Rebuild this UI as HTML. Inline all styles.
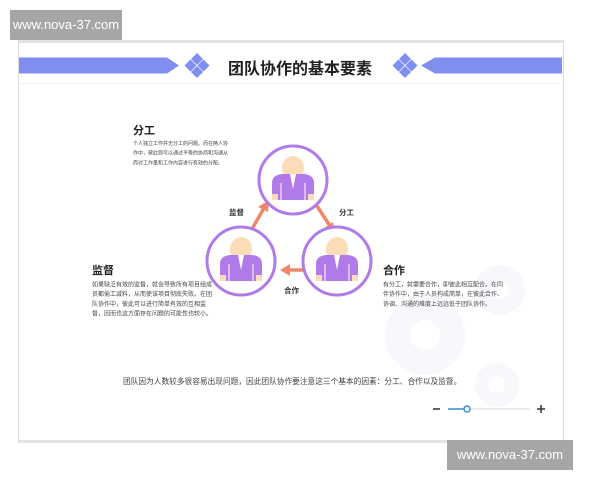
<!DOCTYPE html>
<html><head><meta charset="utf-8"><style>
body{margin:0;width:600px;height:480px;background:#fff;position:relative;overflow:hidden;font-family:"Liberation Sans","Noto Sans CJK SC",sans-serif;}
.a{position:absolute}
.wm{background:#a6a6a6;color:#fff;font-size:13px;line-height:30px;text-align:center}
.t{font-size:12px;color:#444;line-height:19.4px;transform:scale(0.5);transform-origin:0 0}
.h{font-size:11px;font-weight:bold;color:#222}
.l{font-size:7.5px;font-weight:bold;color:#333}
</style></head><body>
<div class="a" style="left:18px;top:40px;width:544px;height:397px;border:1px solid #ddd;border-top:3px solid #e4e4e4;border-bottom:3px solid #e4e4e4;"></div>
<div class="a" style="left:19px;top:83px;width:543px;height:1px;background:#f0f0f0"></div>
<svg class="a" style="left:0;top:0" width="600" height="480">
<defs>
<g id="p">
<circle cx="0" cy="0" r="34" fill="#fff" stroke="#b07be8" stroke-width="3"/>
<ellipse cx="0" cy="-12" rx="11" ry="12" fill="#fbdcb8"/>
<path d="M-21,20 L-21,3 Q-21,-5 -11,-6 L11,-6 Q21,-5 21,3 L21,20 Z" fill="#b07be8"/>
<rect x="-21" y="14" width="6" height="6" fill="#fbdcb8"/><rect x="15" y="14" width="6" height="6" fill="#fbdcb8"/>
<path d="M-3,-6 L0,9 L3,-6" fill="#fff"/><line x1="-12" y1="3" x2="-12" y2="20" stroke="#fff"/><line x1="12" y1="3" x2="12" y2="20" stroke="#fff"/>
</g>
<g id="d">
<polygon points="0,-12.5 6,-6.5 0,-0.5 -6,-6.5"/><polygon points="0,0.5 6,6.5 0,12.5 -6,6.5"/><polygon points="-6.5,-6 -0.5,0 -6.5,6 -12.5,0"/><polygon points="6.5,-6 12.5,0 6.5,6 0.5,0"/>
</g>
</defs>
<polygon points="19,57.5 167,57.5 179,65.5 167,73.5 19,73.5" fill="#7f8ef0"/>
<polygon points="562,57.5 435,57.5 421,65.5 435,73.5 562,73.5" fill="#7f8ef0"/>
<g fill="#7f8ef0"><use href="#d" x="197" y="65.5"/><use href="#d" x="405" y="65.5"/></g>
<g fill="#f7f8fc"><circle cx="425" cy="335" r="40"/><circle cx="500" cy="290" r="25"/><circle cx="497" cy="385" r="22"/></g>
<g fill="#fff"><circle cx="425" cy="335" r="15"/><circle cx="500" cy="290" r="9"/><circle cx="497" cy="385" r="8"/></g>
<g stroke="#f0876a" stroke-width="3.5" fill="#f0876a">
<line x1="252" y1="229" x2="264" y2="208"/><polygon points="269,200 258,207 268,212" stroke="none"/>
<line x1="317" y1="206" x2="330" y2="226"/><polygon points="335,233 324,228 333,222" stroke="none"/>
<line x1="312" y1="270" x2="289" y2="270"/><polygon points="280,270 290,264 290,276" stroke="none"/>
</g>
<use href="#p" x="293" y="180"/><use href="#p" x="241" y="261"/><use href="#p" x="337" y="261"/>
<line x1="449" y1="409" x2="530" y2="409" stroke="#e6e6e6" stroke-width="1.5"/>
<line x1="448" y1="409" x2="467" y2="409" stroke="#3a8fd8" stroke-width="1.5"/>
<circle cx="467" cy="409" r="3" fill="#fff" stroke="#3a8fd8" stroke-width="1.5"/>
<line x1="433" y1="409" x2="440" y2="409" stroke="#333" stroke-width="1.5"/>
<path d="M537,409 h8 M541,405 v8" stroke="#333" stroke-width="1.5"/>
</svg>
<div class="a wm" style="left:10px;top:10px;width:112px">www.nova-37.com</div>
<div class="a wm" style="left:447px;top:440px;width:126px">www.nova-37.com</div>
<div class="a" style="left:200px;top:55px;width:200px;text-align:center;font-size:16px;font-weight:bold;color:#222">团队协作的基本要素</div>
<div class="a h" style="left:133px;top:122px">分工</div>
<div class="a t" style="left:133px;top:139px;width:194px;font-size:10px">个人独立工作并无分工的问题。而在两人协作中，彼此则可以通过平等的协商和沟通从而对工作量和工作内容进行有效的分配。</div>
<div class="a h" style="left:92px;top:262px">监督</div>
<div class="a t" style="left:92px;top:280px;width:250px">如果缺乏有效的监督，就会导致所有项目组成员都偷工减料，从而使该项目彻底失败。在团队协作中，彼此可以进行简单有效的互相监督，因而也这方面存在问题的可能性也较小。</div>
<div class="a h" style="left:383px;top:262px">合作</div>
<div class="a t" style="left:383px;top:280px;width:250px">有分工，就需要合作，即彼此相互配合。在同伴协作中，由于人员构成简单，在彼此合作、协调、沟通的难度上远远低于团队协作。</div>
<div class="a l" style="left:229px;top:207px">监督</div>
<div class="a l" style="left:339px;top:207px">分工</div>
<div class="a l" style="left:284px;top:285px">合作</div>
<div class="a" style="left:123px;top:376px;font-size:7.7px;color:#444">团队因为人数较多很容易出现问题，因此团队协作要注意这三个基本的因素：分工、合作以及监督。</div>
</body></html>
